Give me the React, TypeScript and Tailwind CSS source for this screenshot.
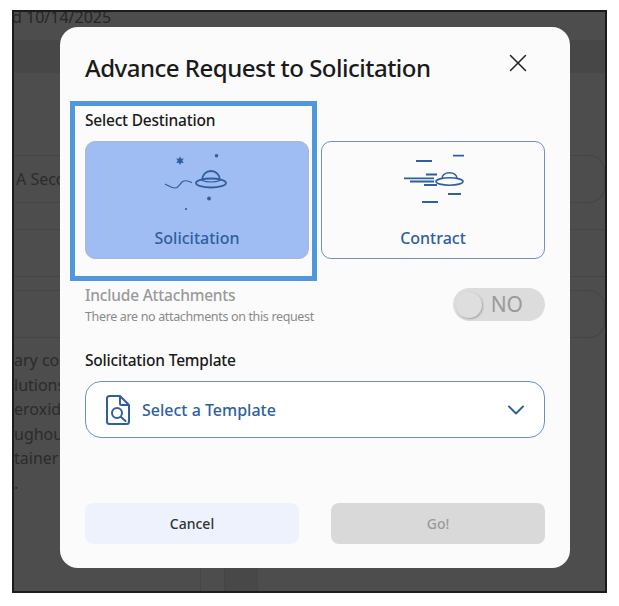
import { ChevronDown, X } from "lucide-react";

const font = "font-['Noto_Sans',sans-serif]";

function UfoIcon() {
  return (
    <svg width="90" height="70" viewBox="2 0 90 70" fill="none" stroke="#2f5f9e" strokeWidth="1.8">
      <path d="M15 39c3 1.500 6 3.500 10 4 3 .3 4-3 7-6 2-1.500 6-1.500 10 .7" strokeWidth="1.200" />
      <ellipse cx="61" cy="38" rx="15" ry="4.500" />
      <path d="M52 35.500c0-5.500 4-9.500 9-9.500s9 4 9 9.500" />
      <path d="M52 35.500c5 2 13 2 18 0" strokeWidth="1.200" />
      <path d="M30 11.500l1.200 2.300 2.600-.3-1.500 2.300 1.500 2.300-2.600-.3-1.200 2.300-1.200-2.300-2.600.3 1.500-2.300-1.500-2.300 2.600.3z" fill="#2f5f9e" stroke="none" />
      <circle cx="66.500" cy="10.700" r="1.800" fill="#2f5f9e" stroke="none" />
      <circle cx="59" cy="53.500" r="1.900" fill="#2f5f9e" stroke="none" />
      <circle cx="36" cy="64" r="1.100" fill="#2f5f9e" stroke="none" />
    </svg>
  );
}

function FastUfoIcon() {
  return (
    <svg width="90" height="70" viewBox="-7 0 90 70" fill="none" stroke="#2f5f9e" strokeWidth="1.800">
      <path d="M21 16h16M58 10.700h11M9 33.300h30M15 36.500h24M31 29.500h11M29 40h13M53 49h13M27 57h16" />
      <ellipse cx="54.500" cy="36.500" rx="13.500" ry="3.700" strokeWidth="1.600" />
      <path d="M47 34c0-3.800 3-6.300 7.500-6.300s7.500 2.500 7.500 6.300" strokeWidth="1.600" />
    </svg>
  );
}

function DocSearchIcon() {
  return (
    <svg width="26" height="32" viewBox="0 0 26 32" fill="none" stroke="#2f5f9e" strokeWidth="2" strokeLinejoin="round">
      <path d="M15 2H4.500A2.500 2.500 0 0 0 2 4.500v23A2.500 2.500 0 0 0 4.500 30h17a2.500 2.500 0 0 0 2.500-2.500V11z" />
      <path d="M15 2v7.500a1.500 1.500 0 0 0 1.500 1.500H24" />
      <circle cx="12" cy="19" r="5" />
      <path d="M16 23l4.500 4" strokeLinecap="round" />
    </svg>
  );
}

function DestinationCard({ label, selected, icon }: { label: string; selected?: boolean; icon: React.ReactNode }) {
  return (
    <div
      className={`flex h-[118px] w-[224px] flex-col items-center rounded-[10px] border ${
        selected ? "border-[#a9b8d3] bg-[#a0bdf3]" : "border-[#6f90bd] bg-[#fbfbfb]"
      }`}
    >
      <div className="mt-[3px]">{icon}</div>
      <span className="mt-[13px] text-[16px] leading-5 font-medium text-[#2f5f9e]">{label}</span>
    </div>
  );
}

export default function App() {
  return (
    <div className={`h-[606px] w-[619px] bg-white pt-[10px] pl-[12px] ${font}`}>
      <div className="relative flex h-[583px] w-[595px] flex-col overflow-hidden border-2 border-[#1c1c1c] bg-[#4d4d4d] text-[16px] text-[#2b2b2b]">
        {/* page behind the dialog */}
        <div className="h-[28px] leading-5">
          <span className="-ml-[2px] block -translate-y-[5px] text-[16px] text-[#262626]">d 10/14/2025</span>
        </div>
        <div className="h-[33px] shrink-0 bg-[#474747]" />
        <div className="mt-[82px] flex h-[48px] shrink-0 items-center rounded-r-2xl border-y border-r border-[#454545] pl-[2px]">
          A Secondary
        </div>
        <div className="mt-[26px] h-[48px] shrink-0 border-y border-[#454545]" />
        <div className="mt-[13px] h-[48px] shrink-0 rounded-r-2xl border-y border-r border-[#454545]" />
        <div className="mt-[10px] leading-[24.500px] whitespace-nowrap">
          <p>ary con</p>
          <p>lutions</p>
          <p>eroxide</p>
          <p>ughout</p>
          <p>tainer</p>
          <p>.</p>
        </div>
        <div className="mt-auto flex h-[24px] shrink-0 pl-[186px]">
          <div className="w-[24px] border-l border-[#454545]" />
          <div className="w-[33px] border-l border-[#454545] bg-[#484848]" />
          <div className="border-l border-[#454545]" />
        </div>

        {/* dialog */}
        <div className="absolute top-[15px] left-[46px] flex h-[541px] w-[510px] flex-col rounded-[18px] bg-[#fbfbfb] px-[25px] text-[#1a1a1a]">
          <div className="flex h-[83px] items-start justify-between">
            <h2 className="mt-[23px] text-[24px] leading-9 font-medium tracking-[-0.5px]">Advance Request to Solicitation</h2>
            <X className="mt-[21px] mr-[12px] h-[30px] w-[30px] text-[#222]" strokeWidth={1.200} />
          </div>
          <p className="text-[15.500px] leading-5 font-medium tracking-[-0.2px]">Select Destination</p>
          <div className="mt-[11px] flex gap-[12px]">
            <DestinationCard label="Solicitation" selected icon={<UfoIcon />} />
            <DestinationCard label="Contract" icon={<FastUfoIcon />} />
          </div>
          <div className="mt-[26px] flex items-start justify-between">
            <div>
              <p className="text-[15.500px] leading-[20px] font-medium tracking-[-0.2px] text-[#9a9a9a]">Include Attachments</p>
              <p className="mt-[3px] text-[12.500px] leading-[18px] tracking-[-0.35px] text-[#8a8a8a]">There are no attachments on this request</p>
            </div>
            <div className="mt-[3px] flex h-[33px] w-[92px] items-center justify-between rounded-full bg-[#dcdcdc] pr-[22px] pl-[3px]">
              <span className="h-[26px] w-[26px] rounded-full bg-[#dedede] shadow-[1px_1px_2px_rgba(0,0,0,0.25)]" />
              <span className="text-[21px] text-[#9a9a9a]">NO</span>
            </div>
          </div>
          <p className="mt-[24px] text-[15.500px] leading-5 font-medium tracking-[-0.2px]">Solicitation Template</p>
          <div className="mt-[11px] flex h-[57px] items-center rounded-[16px] border border-[#6f90bd] bg-white pr-[14px] pl-[19px]">
            <DocSearchIcon />
            <span className="ml-[11px] text-[16px] font-medium text-[#2f5f9e]">Select a Template</span>
            <ChevronDown className="ml-auto h-[28px] w-[28px] text-[#2f5f9e]" strokeWidth={1.600} />
          </div>
          <div className="mt-[65px] flex justify-between">
            <button className="h-[41px] w-[214px] rounded-[8px] bg-[#edf2fc] text-[14px] font-medium text-[#333]">Cancel</button>
            <button className="h-[41px] w-[214px] rounded-[8px] bg-[#d9d9d9] text-[14px] font-medium text-[#9a9a9a]">Go!</button>
          </div>
        </div>

        {/* annotation frame */}
        <div className="absolute top-[89px] left-[56px] h-[180px] w-[247px] border-[5px] border-[#5097db]" />
      </div>
    </div>
  );
}
